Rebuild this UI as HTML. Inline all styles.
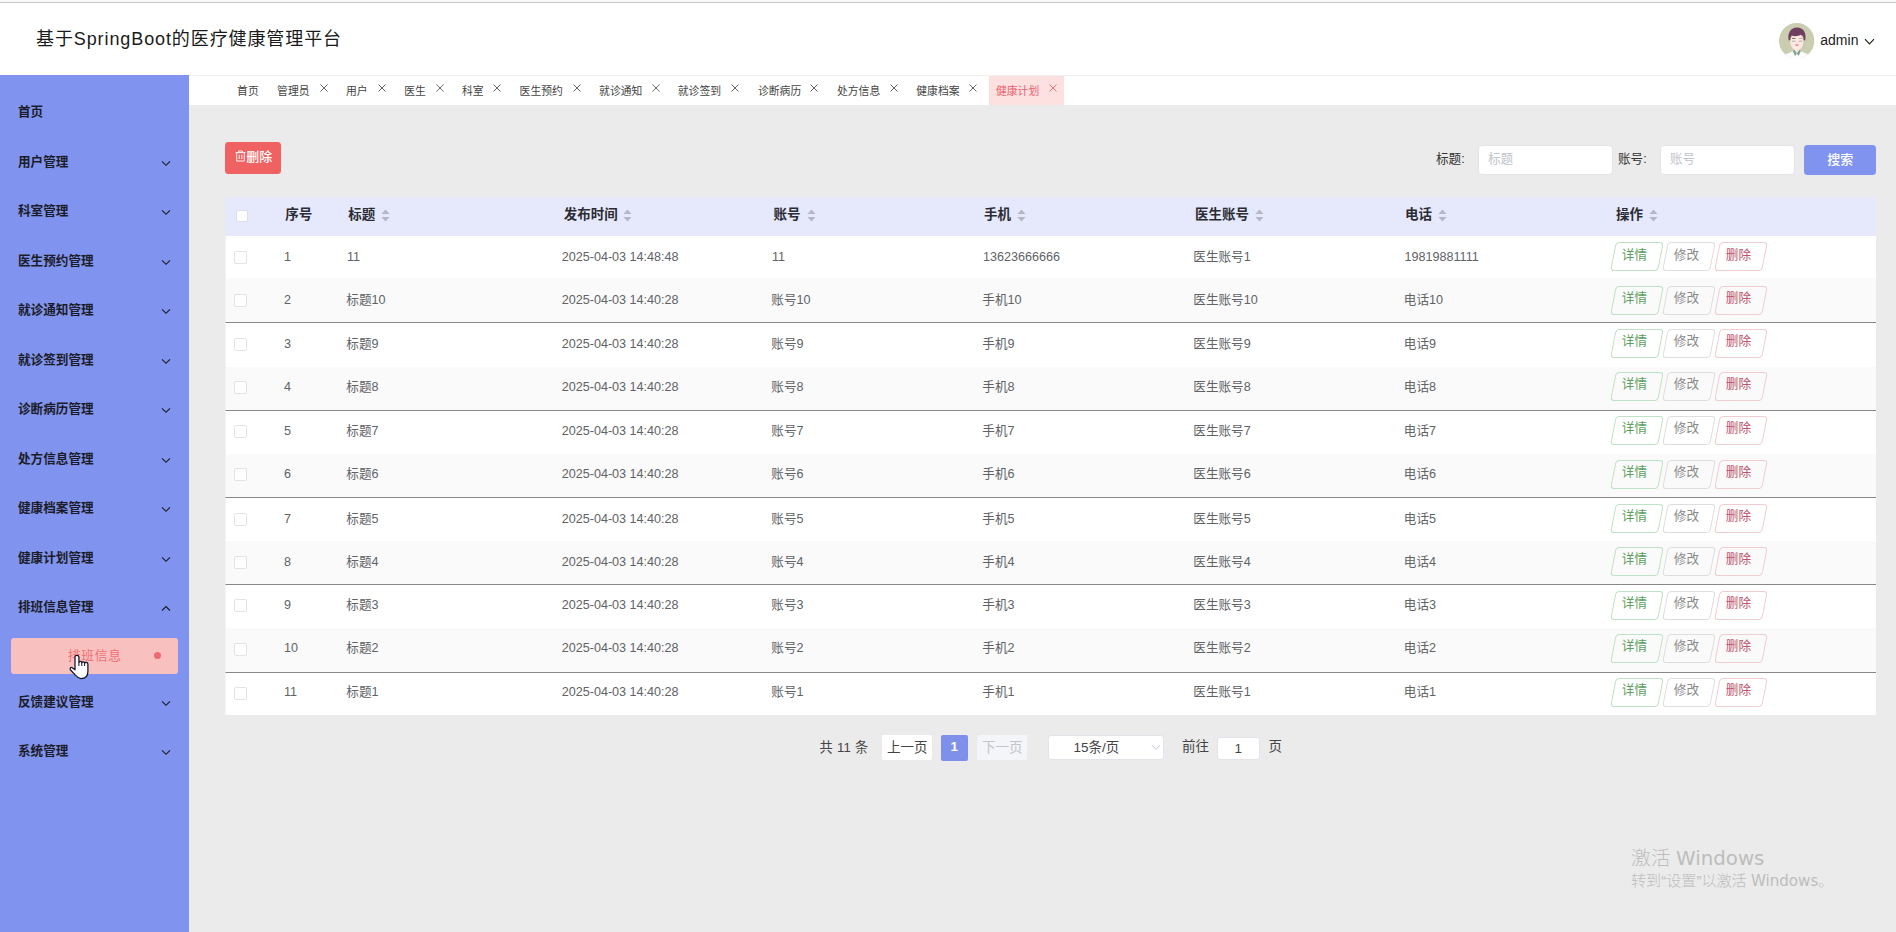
<!DOCTYPE html>
<html lang="zh-CN"><head><meta charset="utf-8"><title>基于SpringBoot的医疗健康管理平台</title>
<style>
*{box-sizing:border-box;margin:0;padding:0}
html,body{width:1896px;height:932px;overflow:hidden;background:#ebebeb;font-family:"Liberation Sans", "Noto Sans CJK SC", sans-serif;color:#333}
.abs{position:absolute;white-space:nowrap}
#top0{left:0;top:0;width:1896px;height:2px;background:#f8f8f8}
#top1{left:0;top:2px;width:1896px;height:1px;background:#c6c6c6}
#hdr{left:0;top:3px;width:1896px;height:72px;background:#fff}
#hdrline{left:189px;top:75px;width:1707px;height:1px;background:#f0f0f0}
#title{left:36px;top:25px;font-size:18px;line-height:28px;letter-spacing:.9px;color:#1a1a1a}
#uname{left:1820.3px;top:28px;font-size:14px;line-height:24px;color:#222}
#side{left:0;top:75px;width:189px;height:857px;background:#8094ef}
.mi{left:18px;font-size:12.6px;font-weight:700;line-height:20px;color:#1c1c28}
.chev{left:161px;width:10px;height:7px}
#sub{left:11px;top:638px;width:167px;height:36px;background:#f9c0c0;border-radius:3px}
#subt{left:67.7px;top:645.5px;letter-spacing:.7px;font-size:12.8px;line-height:20px;color:#f07272}
#subdot{left:154px;top:652px;width:7px;height:7px;border-radius:50%;background:#ee6a70}
#tabs{left:189px;top:76px;width:1707px;height:29px;background:#fff}
.tab{top:81px;font-size:10.8px;line-height:20px;color:#444}
.tx{top:84px;width:8px;height:8px}
#tabact{left:989px;top:76px;width:75px;height:29px;background:#fde0e0}

#btndel{left:225px;top:142px;width:56px;height:32px;background:#f06262;border-radius:3.5px}
#btndelt{left:246.2px;top:147px;font-size:13px;line-height:20px;color:#fff;font-weight:500}
.lbl{top:149px;font-size:12.6px;line-height:20px;color:#333}
.inp{top:145px;width:134.5px;height:29.5px;background:#fff;border:1px solid #e2e4ea;border-radius:4px}
.ph{top:149px;font-size:12.6px;line-height:20px;color:#c0c4cc}
#btns{left:1804px;top:145px;width:72px;height:30px;background:#8094ef;border-radius:3.5px}
#btnst{left:1827.3px;top:150px;font-size:13px;line-height:20px;color:#fff;font-weight:500}
#tbl{left:225px;top:197px;width:1651px;height:518px;background:#fff;overflow:hidden}
#th{left:0;top:0;width:1651px;height:39px;background:#e5e9fb}
.row{left:0;width:1651px}
.ln{left:0;width:1651px;height:1px;background:#888}
.hc{top:8px;font-size:13.5px;font-weight:700;line-height:20px;color:#2b2b33}
.td{font-size:12.6px;line-height:20px;color:#606266}
.cb{left:9px;width:13px;height:13px;border:1px solid #e0e3ea;border-radius:2px;background:#fff}
.hcb{left:11px;top:13px;width:12px;height:12px;border:1px solid #d9ddef;border-radius:2px;background:#fff}
.ob{width:48px;height:28.5px;border:1px solid #ccc;border-radius:4px;transform:skewX(-11deg)}
.obt{font-size:12.6px;line-height:20px}
.wm{color:#bdbdbd;font-weight:300}
.wm span{font-family:"DejaVu Sans","Liberation Sans",sans-serif;font-weight:400}
.pg{font-size:11.7px;line-height:20px;color:#444}
</style></head>
<body>
<div id="top0" class="abs"></div><div id="top1" class="abs"></div>
<div id="hdr" class="abs"></div><div id="hdrline" class="abs"></div>
<div id="title" class="abs">基于SpringBoot的医疗健康管理平台</div>
<svg class="abs" style="left:1779.2px;top:23px" width="35.4" height="35.4" viewBox="0 0 35.4 35.4">
<defs><clipPath id="av"><circle cx="17.7" cy="17.7" r="17.7"/></clipPath></defs>
<g clip-path="url(#av)"><rect width="35.4" height="35.4" fill="#cacdb0"/>
<path d="M3 36 C4 31.6 8 30.6 13.4 28.4 L22.2 28.4 C27.6 30.6 31.6 31.6 32.6 36 Z" fill="#fcfefd"/>
<path d="M15.6 23 H20.1 V28.6 L17.8 31.4 L15.6 28.6 Z" fill="#f8e1d9"/>
<path d="M13.8 28 L15.4 26.9 L17.9 30.6 L16 32.9 Z M21.8 28 L20.3 26.9 L17.9 30.6 L19.7 32.9 Z" fill="#7fa191"/>
<ellipse cx="17.85" cy="19.2" rx="6.5" ry="8.2" fill="#fbe9e2"/>
<path d="M9.7 17.4 C8.2 9.6 12 4.5 18 4.5 C24.2 4.5 27.8 9.6 26.2 17.4 C25.6 17.6 24.8 17.2 24.5 16.4 C24.7 14.6 24.2 13.2 23.4 12.4 C22.8 12.7 22.2 12.3 21.9 11.6 C20.2 13.2 15.6 13.6 12.8 12.6 C11.8 13.6 11.3 15 11.4 16.4 C11.1 17.2 10.3 17.6 9.7 17.4 Z" fill="#6e3e5f"/>
<path d="M13 15.4 H16.6" stroke="#5b4a35" stroke-width=".8"/><path d="M19.8 15.5 H23.2" stroke="#9a9088" stroke-width=".7"/>
<path d="M12.9 18.6 q1.8 -1.3 3.6 0 M19.8 18.6 q1.7 -1.3 3.4 0" stroke="#8a6a70" stroke-width=".55" fill="none"/>
<ellipse cx="17.9" cy="22.1" rx="1.8" ry=".75" fill="#e17088"/>
</g></svg>
<div id="uname" class="abs">admin</div>
<svg class="abs" style="left:1864px;top:38px" width="11" height="8" viewBox="0 0 11 8"><path d="M1 1.2 L5.5 5.8 L10 1.2" fill="none" stroke="#222" stroke-width="1.2"/></svg>
<div id="side" class="abs"></div>
<div class="abs mi" style="top:102px">首页</div>
<div class="abs mi" style="top:152px">用户管理</div>
<svg class="abs chev" style="top:159.5px" viewBox="0 0 10 7"><path d="M1 1.3 L5 5.3 L9 1.3" fill="none" stroke="#1c1c28" stroke-width="1.15"/></svg>
<div class="abs mi" style="top:201px">科室管理</div>
<svg class="abs chev" style="top:208.5px" viewBox="0 0 10 7"><path d="M1 1.3 L5 5.3 L9 1.3" fill="none" stroke="#1c1c28" stroke-width="1.15"/></svg>
<div class="abs mi" style="top:251px">医生预约管理</div>
<svg class="abs chev" style="top:258.5px" viewBox="0 0 10 7"><path d="M1 1.3 L5 5.3 L9 1.3" fill="none" stroke="#1c1c28" stroke-width="1.15"/></svg>
<div class="abs mi" style="top:300px">就诊通知管理</div>
<svg class="abs chev" style="top:307.5px" viewBox="0 0 10 7"><path d="M1 1.3 L5 5.3 L9 1.3" fill="none" stroke="#1c1c28" stroke-width="1.15"/></svg>
<div class="abs mi" style="top:350px">就诊签到管理</div>
<svg class="abs chev" style="top:357.5px" viewBox="0 0 10 7"><path d="M1 1.3 L5 5.3 L9 1.3" fill="none" stroke="#1c1c28" stroke-width="1.15"/></svg>
<div class="abs mi" style="top:399px">诊断病历管理</div>
<svg class="abs chev" style="top:406.5px" viewBox="0 0 10 7"><path d="M1 1.3 L5 5.3 L9 1.3" fill="none" stroke="#1c1c28" stroke-width="1.15"/></svg>
<div class="abs mi" style="top:449px">处方信息管理</div>
<svg class="abs chev" style="top:456.5px" viewBox="0 0 10 7"><path d="M1 1.3 L5 5.3 L9 1.3" fill="none" stroke="#1c1c28" stroke-width="1.15"/></svg>
<div class="abs mi" style="top:498px">健康档案管理</div>
<svg class="abs chev" style="top:505.5px" viewBox="0 0 10 7"><path d="M1 1.3 L5 5.3 L9 1.3" fill="none" stroke="#1c1c28" stroke-width="1.15"/></svg>
<div class="abs mi" style="top:548px">健康计划管理</div>
<svg class="abs chev" style="top:555.5px" viewBox="0 0 10 7"><path d="M1 1.3 L5 5.3 L9 1.3" fill="none" stroke="#1c1c28" stroke-width="1.15"/></svg>
<div class="abs mi" style="top:597px">排班信息管理</div>
<svg class="abs chev" style="top:604.5px" viewBox="0 0 10 7"><path d="M1 5.5 L5 1.5 L9 5.5" fill="none" stroke="#1c1c28" stroke-width="1.15"/></svg>
<div class="abs mi" style="top:692px">反馈建议管理</div>
<svg class="abs chev" style="top:699.5px" viewBox="0 0 10 7"><path d="M1 1.3 L5 5.3 L9 1.3" fill="none" stroke="#1c1c28" stroke-width="1.15"/></svg>
<div class="abs mi" style="top:741px">系统管理</div>
<svg class="abs chev" style="top:748.5px" viewBox="0 0 10 7"><path d="M1 1.3 L5 5.3 L9 1.3" fill="none" stroke="#1c1c28" stroke-width="1.15"/></svg>
<div id="sub" class="abs"></div><div id="subt" class="abs">排班信息</div><div id="subdot" class="abs"></div>
<div id="tabs" class="abs"></div><div id="tabact" class="abs"></div>
<div class="abs tab" style="left:237.1px">首页</div>
<div class="abs tab" style="left:277.1px">管理员</div>
<svg class="abs tx" style="left:319.9px" viewBox="0 0 8 8"><path d="M.5 .5 L7.5 7.5 M7.5 .5 L.5 7.5" stroke="#555" stroke-width=".9" fill="none"/></svg>
<div class="abs tab" style="left:346.0px">用户</div>
<svg class="abs tx" style="left:377.6px" viewBox="0 0 8 8"><path d="M.5 .5 L7.5 7.5 M7.5 .5 L.5 7.5" stroke="#555" stroke-width=".9" fill="none"/></svg>
<div class="abs tab" style="left:404.2px">医生</div>
<svg class="abs tx" style="left:435.8px" viewBox="0 0 8 8"><path d="M.5 .5 L7.5 7.5 M7.5 .5 L.5 7.5" stroke="#555" stroke-width=".9" fill="none"/></svg>
<div class="abs tab" style="left:461.9px">科室</div>
<svg class="abs tx" style="left:492.8px" viewBox="0 0 8 8"><path d="M.5 .5 L7.5 7.5 M7.5 .5 L.5 7.5" stroke="#555" stroke-width=".9" fill="none"/></svg>
<div class="abs tab" style="left:519.6px">医生预约</div>
<svg class="abs tx" style="left:572.5px" viewBox="0 0 8 8"><path d="M.5 .5 L7.5 7.5 M7.5 .5 L.5 7.5" stroke="#555" stroke-width=".9" fill="none"/></svg>
<div class="abs tab" style="left:599.1px">就诊通知</div>
<svg class="abs tx" style="left:651.5px" viewBox="0 0 8 8"><path d="M.5 .5 L7.5 7.5 M7.5 .5 L.5 7.5" stroke="#555" stroke-width=".9" fill="none"/></svg>
<div class="abs tab" style="left:677.8px">就诊签到</div>
<svg class="abs tx" style="left:731.4px" viewBox="0 0 8 8"><path d="M.5 .5 L7.5 7.5 M7.5 .5 L.5 7.5" stroke="#555" stroke-width=".9" fill="none"/></svg>
<div class="abs tab" style="left:758.0px">诊断病历</div>
<svg class="abs tx" style="left:810.4px" viewBox="0 0 8 8"><path d="M.5 .5 L7.5 7.5 M7.5 .5 L.5 7.5" stroke="#555" stroke-width=".9" fill="none"/></svg>
<div class="abs tab" style="left:837.0px">处方信息</div>
<svg class="abs tx" style="left:889.7px" viewBox="0 0 8 8"><path d="M.5 .5 L7.5 7.5 M7.5 .5 L.5 7.5" stroke="#555" stroke-width=".9" fill="none"/></svg>
<div class="abs tab" style="left:916.3px">健康档案</div>
<svg class="abs tx" style="left:969.1px" viewBox="0 0 8 8"><path d="M.5 .5 L7.5 7.5 M7.5 .5 L.5 7.5" stroke="#555" stroke-width=".9" fill="none"/></svg>
<div class="abs tab" style="left:996.0px;color:#e9656f">健康计划</div>
<svg class="abs tx" style="left:1048.5px" viewBox="0 0 8 8"><path d="M.5 .5 L7.5 7.5 M7.5 .5 L.5 7.5" stroke="#e9656f" stroke-width=".9" fill="none"/></svg>
<div id="btndel" class="abs"></div>
<svg class="abs" style="left:235px;top:150px" width="11" height="12" viewBox="0 0 11 12"><path d="M.6 2.6 H10.4 M3.6 2.4 V1 H7.4 V2.4 M1.7 2.8 V11 H9.3 V2.8 M4.2 4.8 V9 M6.8 4.8 V9" stroke="#fff" stroke-width=".95" fill="none"/></svg>
<div id="btndelt" class="abs">删除</div>
<div class="abs lbl" style="left:1436px">标题:</div><div class="abs inp" style="left:1478px"></div><div class="abs ph" style="left:1488px">标题</div>
<div class="abs lbl" style="left:1618px">账号:</div><div class="abs inp" style="left:1660px"></div><div class="abs ph" style="left:1670px">账号</div>
<div id="btns" class="abs"></div><div id="btnst" class="abs">搜索</div>
<div id="tbl" class="abs"><div id="th" class="abs"></div><div class="abs hcb"></div>
<div class="abs hc" style="left:60.3px">序号</div>
<div class="abs hc" style="left:123.3px">标题</div>
<svg class="abs" style="left:156.0px;top:11.5px" width="9" height="13" viewBox="0 0 9 13"><path d="M.4 5 L4.5 .6 L8.6 5Z M.4 8 L4.5 12.4 L8.6 8Z" fill="#b4b8c4"/></svg>
<div class="abs hc" style="left:338.7px">发布时间</div>
<svg class="abs" style="left:397.7px;top:11.5px" width="9" height="13" viewBox="0 0 9 13"><path d="M.4 5 L4.5 .6 L8.6 5Z M.4 8 L4.5 12.4 L8.6 8Z" fill="#b4b8c4"/></svg>
<div class="abs hc" style="left:548.5px">账号</div>
<svg class="abs" style="left:581.5px;top:11.5px" width="9" height="13" viewBox="0 0 9 13"><path d="M.4 5 L4.5 .6 L8.6 5Z M.4 8 L4.5 12.4 L8.6 8Z" fill="#b4b8c4"/></svg>
<div class="abs hc" style="left:759.0px">手机</div>
<svg class="abs" style="left:792.0px;top:11.5px" width="9" height="13" viewBox="0 0 9 13"><path d="M.4 5 L4.5 .6 L8.6 5Z M.4 8 L4.5 12.4 L8.6 8Z" fill="#b4b8c4"/></svg>
<div class="abs hc" style="left:970.0px">医生账号</div>
<svg class="abs" style="left:1030.0px;top:11.5px" width="9" height="13" viewBox="0 0 9 13"><path d="M.4 5 L4.5 .6 L8.6 5Z M.4 8 L4.5 12.4 L8.6 8Z" fill="#b4b8c4"/></svg>
<div class="abs hc" style="left:1180.0px">电话</div>
<svg class="abs" style="left:1213.0px;top:11.5px" width="9" height="13" viewBox="0 0 9 13"><path d="M.4 5 L4.5 .6 L8.6 5Z M.4 8 L4.5 12.4 L8.6 8Z" fill="#b4b8c4"/></svg>
<div class="abs hc" style="left:1391.0px">操作</div>
<svg class="abs" style="left:1424.0px;top:11.5px" width="9" height="13" viewBox="0 0 9 13"><path d="M.4 5 L4.5 .6 L8.6 5Z M.4 8 L4.5 12.4 L8.6 8Z" fill="#b4b8c4"/></svg>
<div class="abs row" style="top:39px;height:42px;background:#fff"></div>
<div class="abs cb" style="top:54px"></div>
<div class="abs td" style="left:59.0px;top:50px">1</div>
<div class="abs td" style="left:122.0px;top:50px">11</div>
<div class="abs td" style="left:336.7px;top:50px">2025-04-03 14:48:48</div>
<div class="abs td" style="left:547.0px;top:50px">11</div>
<div class="abs td" style="left:758.0px;top:50px">13623666666</div>
<div class="abs td" style="left:968.3px;top:50px">医生账号1</div>
<div class="abs td" style="left:1179.5px;top:50px">19819881111</div>
<div class="abs ob" style="left:1387.8px;top:45.4px;border-color:#bfe1c5"></div>
<div class="abs obt" style="left:1396.8px;top:48px;color:#5d9f62">详情</div>
<div class="abs ob" style="left:1439.8px;top:45.4px;border-color:#dedede"></div>
<div class="abs obt" style="left:1448.8px;top:48px;color:#8a8a8a">修改</div>
<div class="abs ob" style="left:1491.8px;top:45.4px;border-color:#efcdd0"></div>
<div class="abs obt" style="left:1500.8px;top:48px;color:#c0526a">删除</div>
<div class="abs row" style="top:81px;height:44px;background:#fafafa"></div>
<div class="abs cb" style="top:97px"></div>
<div class="abs td" style="left:59.0px;top:93px">2</div>
<div class="abs td" style="left:121.3px;top:93px">标题10</div>
<div class="abs td" style="left:336.7px;top:93px">2025-04-03 14:40:28</div>
<div class="abs td" style="left:546.3px;top:93px">账号10</div>
<div class="abs td" style="left:757.3px;top:93px">手机10</div>
<div class="abs td" style="left:968.3px;top:93px">医生账号10</div>
<div class="abs td" style="left:1178.8px;top:93px">电话10</div>
<div class="abs ob" style="left:1387.8px;top:88.5px;border-color:#bfe1c5"></div>
<div class="abs obt" style="left:1396.8px;top:91px;color:#5d9f62">详情</div>
<div class="abs ob" style="left:1439.8px;top:88.5px;border-color:#dedede"></div>
<div class="abs obt" style="left:1448.8px;top:91px;color:#8a8a8a">修改</div>
<div class="abs ob" style="left:1491.8px;top:88.5px;border-color:#efcdd0"></div>
<div class="abs obt" style="left:1500.8px;top:91px;color:#c0526a">删除</div>
<div class="abs row" style="top:126px;height:44px;background:#fff"></div>
<div class="abs cb" style="top:141px"></div>
<div class="abs td" style="left:59.0px;top:137px">3</div>
<div class="abs td" style="left:121.3px;top:137px">标题9</div>
<div class="abs td" style="left:336.7px;top:137px">2025-04-03 14:40:28</div>
<div class="abs td" style="left:546.3px;top:137px">账号9</div>
<div class="abs td" style="left:757.3px;top:137px">手机9</div>
<div class="abs td" style="left:968.3px;top:137px">医生账号9</div>
<div class="abs td" style="left:1178.8px;top:137px">电话9</div>
<div class="abs ob" style="left:1387.8px;top:132.2px;border-color:#bfe1c5"></div>
<div class="abs obt" style="left:1396.8px;top:134px;color:#5d9f62">详情</div>
<div class="abs ob" style="left:1439.8px;top:132.2px;border-color:#dedede"></div>
<div class="abs obt" style="left:1448.8px;top:134px;color:#8a8a8a">修改</div>
<div class="abs ob" style="left:1491.8px;top:132.2px;border-color:#efcdd0"></div>
<div class="abs obt" style="left:1500.8px;top:134px;color:#c0526a">删除</div>
<div class="abs row" style="top:170px;height:43px;background:#fafafa"></div>
<div class="abs cb" style="top:184px"></div>
<div class="abs td" style="left:59.0px;top:180px">4</div>
<div class="abs td" style="left:121.3px;top:180px">标题8</div>
<div class="abs td" style="left:336.7px;top:180px">2025-04-03 14:40:28</div>
<div class="abs td" style="left:546.3px;top:180px">账号8</div>
<div class="abs td" style="left:757.3px;top:180px">手机8</div>
<div class="abs td" style="left:968.3px;top:180px">医生账号8</div>
<div class="abs td" style="left:1178.8px;top:180px">电话8</div>
<div class="abs ob" style="left:1387.8px;top:175.1px;border-color:#bfe1c5"></div>
<div class="abs obt" style="left:1396.8px;top:177px;color:#5d9f62">详情</div>
<div class="abs ob" style="left:1439.8px;top:175.1px;border-color:#dedede"></div>
<div class="abs obt" style="left:1448.8px;top:177px;color:#8a8a8a">修改</div>
<div class="abs ob" style="left:1491.8px;top:175.1px;border-color:#efcdd0"></div>
<div class="abs obt" style="left:1500.8px;top:177px;color:#c0526a">删除</div>
<div class="abs row" style="top:214px;height:43px;background:#fff"></div>
<div class="abs cb" style="top:228px"></div>
<div class="abs td" style="left:59.0px;top:224px">5</div>
<div class="abs td" style="left:121.3px;top:224px">标题7</div>
<div class="abs td" style="left:336.7px;top:224px">2025-04-03 14:40:28</div>
<div class="abs td" style="left:546.3px;top:224px">账号7</div>
<div class="abs td" style="left:757.3px;top:224px">手机7</div>
<div class="abs td" style="left:968.3px;top:224px">医生账号7</div>
<div class="abs td" style="left:1178.8px;top:224px">电话7</div>
<div class="abs ob" style="left:1387.8px;top:219.2px;border-color:#bfe1c5"></div>
<div class="abs obt" style="left:1396.8px;top:221px;color:#5d9f62">详情</div>
<div class="abs ob" style="left:1439.8px;top:219.2px;border-color:#dedede"></div>
<div class="abs obt" style="left:1448.8px;top:221px;color:#8a8a8a">修改</div>
<div class="abs ob" style="left:1491.8px;top:219.2px;border-color:#efcdd0"></div>
<div class="abs obt" style="left:1500.8px;top:221px;color:#c0526a">删除</div>
<div class="abs row" style="top:257px;height:43px;background:#fafafa"></div>
<div class="abs cb" style="top:271px"></div>
<div class="abs td" style="left:59.0px;top:267px">6</div>
<div class="abs td" style="left:121.3px;top:267px">标题6</div>
<div class="abs td" style="left:336.7px;top:267px">2025-04-03 14:40:28</div>
<div class="abs td" style="left:546.3px;top:267px">账号6</div>
<div class="abs td" style="left:757.3px;top:267px">手机6</div>
<div class="abs td" style="left:968.3px;top:267px">医生账号6</div>
<div class="abs td" style="left:1178.8px;top:267px">电话6</div>
<div class="abs ob" style="left:1387.8px;top:262.6px;border-color:#bfe1c5"></div>
<div class="abs obt" style="left:1396.8px;top:265px;color:#5d9f62">详情</div>
<div class="abs ob" style="left:1439.8px;top:262.6px;border-color:#dedede"></div>
<div class="abs obt" style="left:1448.8px;top:265px;color:#8a8a8a">修改</div>
<div class="abs ob" style="left:1491.8px;top:262.6px;border-color:#efcdd0"></div>
<div class="abs obt" style="left:1500.8px;top:265px;color:#c0526a">删除</div>
<div class="abs row" style="top:301px;height:43px;background:#fff"></div>
<div class="abs cb" style="top:316px"></div>
<div class="abs td" style="left:59.0px;top:312px">7</div>
<div class="abs td" style="left:121.3px;top:312px">标题5</div>
<div class="abs td" style="left:336.7px;top:312px">2025-04-03 14:40:28</div>
<div class="abs td" style="left:546.3px;top:312px">账号5</div>
<div class="abs td" style="left:757.3px;top:312px">手机5</div>
<div class="abs td" style="left:968.3px;top:312px">医生账号5</div>
<div class="abs td" style="left:1178.8px;top:312px">电话5</div>
<div class="abs ob" style="left:1387.8px;top:307.1px;border-color:#bfe1c5"></div>
<div class="abs obt" style="left:1396.8px;top:309px;color:#5d9f62">详情</div>
<div class="abs ob" style="left:1439.8px;top:307.1px;border-color:#dedede"></div>
<div class="abs obt" style="left:1448.8px;top:309px;color:#8a8a8a">修改</div>
<div class="abs ob" style="left:1491.8px;top:307.1px;border-color:#efcdd0"></div>
<div class="abs obt" style="left:1500.8px;top:309px;color:#c0526a">删除</div>
<div class="abs row" style="top:344px;height:43px;background:#fafafa"></div>
<div class="abs cb" style="top:359px"></div>
<div class="abs td" style="left:59.0px;top:355px">8</div>
<div class="abs td" style="left:121.3px;top:355px">标题4</div>
<div class="abs td" style="left:336.7px;top:355px">2025-04-03 14:40:28</div>
<div class="abs td" style="left:546.3px;top:355px">账号4</div>
<div class="abs td" style="left:757.3px;top:355px">手机4</div>
<div class="abs td" style="left:968.3px;top:355px">医生账号4</div>
<div class="abs td" style="left:1178.8px;top:355px">电话4</div>
<div class="abs ob" style="left:1387.8px;top:350.0px;border-color:#bfe1c5"></div>
<div class="abs obt" style="left:1396.8px;top:352px;color:#5d9f62">详情</div>
<div class="abs ob" style="left:1439.8px;top:350.0px;border-color:#dedede"></div>
<div class="abs obt" style="left:1448.8px;top:352px;color:#8a8a8a">修改</div>
<div class="abs ob" style="left:1491.8px;top:350.0px;border-color:#efcdd0"></div>
<div class="abs obt" style="left:1500.8px;top:352px;color:#c0526a">删除</div>
<div class="abs row" style="top:388px;height:43px;background:#fff"></div>
<div class="abs cb" style="top:402px"></div>
<div class="abs td" style="left:59.0px;top:398px">9</div>
<div class="abs td" style="left:121.3px;top:398px">标题3</div>
<div class="abs td" style="left:336.7px;top:398px">2025-04-03 14:40:28</div>
<div class="abs td" style="left:546.3px;top:398px">账号3</div>
<div class="abs td" style="left:757.3px;top:398px">手机3</div>
<div class="abs td" style="left:968.3px;top:398px">医生账号3</div>
<div class="abs td" style="left:1178.8px;top:398px">电话3</div>
<div class="abs ob" style="left:1387.8px;top:393.7px;border-color:#bfe1c5"></div>
<div class="abs obt" style="left:1396.8px;top:396px;color:#5d9f62">详情</div>
<div class="abs ob" style="left:1439.8px;top:393.7px;border-color:#dedede"></div>
<div class="abs obt" style="left:1448.8px;top:396px;color:#8a8a8a">修改</div>
<div class="abs ob" style="left:1491.8px;top:393.7px;border-color:#efcdd0"></div>
<div class="abs obt" style="left:1500.8px;top:396px;color:#c0526a">删除</div>
<div class="abs row" style="top:431px;height:44px;background:#fafafa"></div>
<div class="abs cb" style="top:446px"></div>
<div class="abs td" style="left:59.0px;top:441px">10</div>
<div class="abs td" style="left:121.3px;top:441px">标题2</div>
<div class="abs td" style="left:336.7px;top:441px">2025-04-03 14:40:28</div>
<div class="abs td" style="left:546.3px;top:441px">账号2</div>
<div class="abs td" style="left:757.3px;top:441px">手机2</div>
<div class="abs td" style="left:968.3px;top:441px">医生账号2</div>
<div class="abs td" style="left:1178.8px;top:441px">电话2</div>
<div class="abs ob" style="left:1387.8px;top:436.8px;border-color:#bfe1c5"></div>
<div class="abs obt" style="left:1396.8px;top:439px;color:#5d9f62">详情</div>
<div class="abs ob" style="left:1439.8px;top:436.8px;border-color:#dedede"></div>
<div class="abs obt" style="left:1448.8px;top:439px;color:#8a8a8a">修改</div>
<div class="abs ob" style="left:1491.8px;top:436.8px;border-color:#efcdd0"></div>
<div class="abs obt" style="left:1500.8px;top:439px;color:#c0526a">删除</div>
<div class="abs row" style="top:476px;height:42px;background:#fff"></div>
<div class="abs cb" style="top:490px"></div>
<div class="abs td" style="left:59.0px;top:485px">11</div>
<div class="abs td" style="left:121.3px;top:485px">标题1</div>
<div class="abs td" style="left:336.7px;top:485px">2025-04-03 14:40:28</div>
<div class="abs td" style="left:546.3px;top:485px">账号1</div>
<div class="abs td" style="left:757.3px;top:485px">手机1</div>
<div class="abs td" style="left:968.3px;top:485px">医生账号1</div>
<div class="abs td" style="left:1178.8px;top:485px">电话1</div>
<div class="abs ob" style="left:1387.8px;top:480.8px;border-color:#bfe1c5"></div>
<div class="abs obt" style="left:1396.8px;top:483px;color:#5d9f62">详情</div>
<div class="abs ob" style="left:1439.8px;top:480.8px;border-color:#dedede"></div>
<div class="abs obt" style="left:1448.8px;top:483px;color:#8a8a8a">修改</div>
<div class="abs ob" style="left:1491.8px;top:480.8px;border-color:#efcdd0"></div>
<div class="abs obt" style="left:1500.8px;top:483px;color:#c0526a">删除</div>
<div class="abs ln" style="top:125px"></div>
<div class="abs ln" style="top:213px"></div>
<div class="abs ln" style="top:300px"></div>
<div class="abs ln" style="top:387px"></div>
<div class="abs ln" style="top:475px"></div>
<div class="abs" style="left:0;top:0;width:1px;height:518px;background:rgba(235,235,235,.55)"></div></div>
<div class="abs pg" style="left:819.6px;top:737.5px;font-size:13.2px;word-spacing:.6px">共 11 条</div>
<div class="abs" style="left:882px;top:735px;width:50px;height:25px;background:#fff;border-radius:2px"></div><div class="abs pg" style="left:887px;top:737.5px;font-size:13.5px">上一页</div>
<div class="abs" style="left:941px;top:734.5px;width:27px;height:26px;background:#7f90ea;border-radius:2px"></div><div class="abs pg" style="left:950.4px;top:737px;font-size:13.5px;font-weight:700;color:#fff">1</div>
<div class="abs" style="left:977px;top:735px;width:50px;height:25px;background:#f4f5f8;border-radius:2px"></div><div class="abs pg" style="left:982px;top:737.5px;font-size:13.5px;color:#c0c4cc">下一页</div>
<div class="abs" style="left:1047.5px;top:735px;width:116px;height:25px;background:#fff;border:1px solid #e2e4ea;border-radius:3px"></div><div class="abs pg" style="left:1073.5px;top:738px;font-size:13.5px">15条/页</div>
<svg class="abs" style="left:1151px;top:744px" width="10" height="7" viewBox="0 0 10 7"><path d="M1 1.3 L5 5.3 L9 1.3" fill="none" stroke="#c0c4cc" stroke-width="1"/></svg>
<div class="abs pg" style="left:1182px;top:737px;font-size:13.5px">前往</div>
<div class="abs" style="left:1217px;top:737px;width:43px;height:23px;background:#fff;border:1px solid #e2e4ea;border-radius:3px"></div><div class="abs pg" style="left:1234.5px;top:738.5px;font-size:13.5px">1</div>
<div class="abs pg" style="left:1268.4px;top:737px;font-size:13.5px">页</div>
<div class="abs wm" style="left:1631px;top:845px;font-size:19.8px;line-height:26px">激活 <span>Windows</span></div>
<div class="abs wm" style="left:1631px;top:871px;font-size:15.1px;line-height:20px">转到“设置”以激活 <span>Windows</span>。</div>
<svg class="abs" style="left:68px;top:653px" width="22" height="27" viewBox="0 0 22 27"><path d="M7 4 C7 1.7 10.9 1.7 10.9 4 V9.4 C11.5 8.1 13.6 8.1 13.8 9.7 C14.4 8.5 16.4 8.7 16.6 10.1 C17.2 8.9 19.9 9.1 19.9 11.2 V18.5 C19.9 22.5 17.5 25.5 13 25.5 C10.5 25.5 9 24 7.6 22.4 L2.6 17 C1.4 15.6 2.6 13.8 4.2 14.8 L7 16.8 Z" fill="#fff" stroke="#13132a" stroke-width="1.25" stroke-linejoin="round"/><path d="M10.9 9.4 V13 M13.8 9.8 V13 M16.6 10.2 V13" stroke="#13132a" stroke-width="1"/></svg>
</body></html>
